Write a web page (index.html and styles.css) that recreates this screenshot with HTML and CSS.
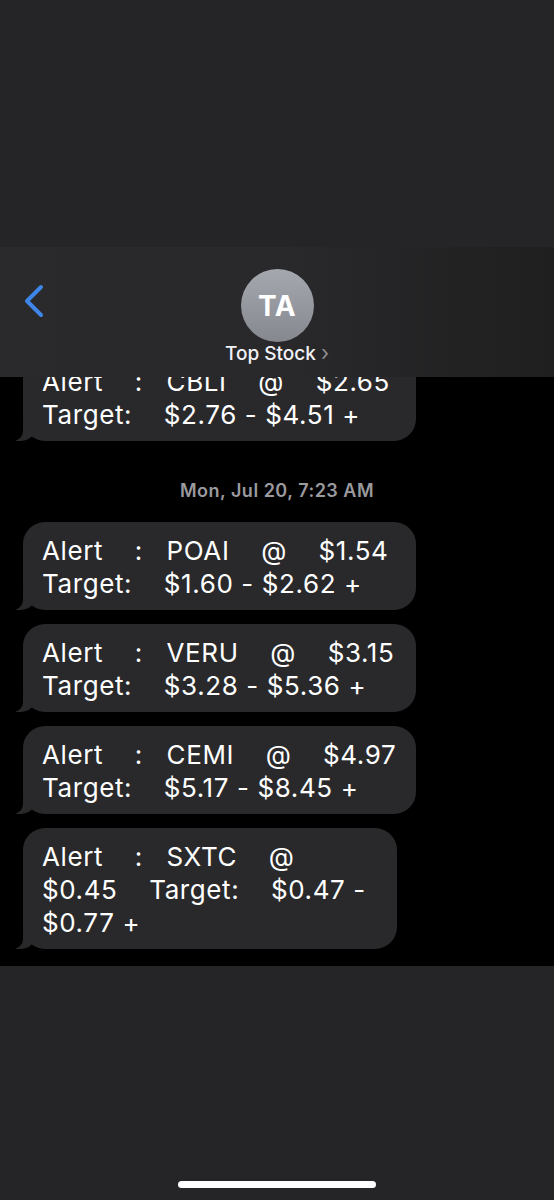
FILE: index.html
```html
<!DOCTYPE html>
<html lang="en">
<head>
    <meta charset="UTF-8">
    <meta name="viewport" content="width=device-width, initial-scale=1.0">
    <title>Top Stock</title>
    <link rel="stylesheet" href="styles.css">
</head>
<body>
    <div class="status-area"></div>

    <div class="thread">
        <div class="nav">
            <a class="back" href="#" aria-label="Back">
                <svg width="22" height="34" viewBox="0 0 22 34">
                    <path d="M18 3 L4 17 L18 31" fill="none" stroke="#3d86e8" stroke-width="4" stroke-linecap="round" stroke-linejoin="round"/>
                </svg>
            </a>
            <div class="avatar">TA</div>
            <div class="contact-name">Top Stock <span class="chev">&#8250;</span></div>
        </div>

        <div class="messages">
            <div class="bubble">Alert    :   CBLI    @    $2.65<br>Target:    $2.76 - $4.51 +</div>

            <div class="timestamp">Mon, Jul 20, 7:23 AM</div>

            <div class="bubble">Alert    :   POAI    @    $1.54<br>Target:    $1.60 - $2.62 +</div>
            <div class="bubble">Alert    :   VERU    @    $3.15<br>Target:    $3.28 - $5.36 +</div>
            <div class="bubble">Alert    :   CEMI    @    $4.97<br>Target:    $5.17 - $8.45 +</div>
            <div class="bubble narrow">Alert    :   SXTC    @<br>$0.45    Target:    $0.47 -<br>$0.77 +</div>
        </div>
    </div>

    <div class="bottom-area">
        <div class="home-indicator"></div>
    </div>
</body>
</html>
```

FILE: styles.css
```css
:root {
    --bubble-color: #29292b;
    --muted: #8e8e93;
}

* {
    box-sizing: border-box;
    margin: 0;
    padding: 0;
}

body {
    font-family: 'Inter', 'Liberation Sans', sans-serif;
    background: #252527;
    color: #fff;
    width: 554px;
    height: 1200px;
    overflow: hidden;
}

.status-area {
    height: 247px;
    background: #252527;
}

.thread {
    position: relative;
    height: 719px;
    background: #000;
    overflow: hidden;
}

/* header sits over the scrolled messages */
.nav {
    position: absolute;
    top: 0;
    left: 0;
    right: 0;
    height: 130px;
    z-index: 2;
    display: flex;
    flex-direction: column;
    align-items: center;
    padding-top: 22px;
    background: linear-gradient(90deg, #2a2a2c 0%, #29292b 50%, #1f1f20 100%);
}

.back {
    position: absolute;
    left: 23px;
    top: 37px;
    display: block;
}

.back svg {
    display: block;
}

.avatar {
    width: 73px;
    height: 73px;
    border-radius: 50%;
    background: linear-gradient(180deg, #a6a8af 0%, #868890 100%);
    display: flex;
    align-items: center;
    justify-content: center;
    font-size: 28px;
    font-weight: 700;
    color: #fff;
    letter-spacing: 0.5px;
}

.contact-name {
    font-size: 19px;
    line-height: 22px;
    font-weight: 500;
    color: #f2f2f7;
}

.contact-name .chev {
    color: var(--muted);
    font-weight: 400;
    font-size: 21px;
}

.messages {
    display: flex;
    flex-direction: column;
    align-items: flex-start;
    gap: 14px;
    padding: 106px 0 0 23px;
}

.bubble {
    position: relative;
    width: 393px;
    padding: 12px 19px 10px;
    background: var(--bubble-color);
    border-radius: 22px;
    font-size: 26px;
    line-height: 33px;
    letter-spacing: 0.6px;
    white-space: pre;
}

.bubble.narrow {
    width: 374px;
}

/* tail */
.bubble::before {
    content: '';
    position: absolute;
    bottom: 0;
    left: -7px;
    width: 20px;
    height: 20px;
    background: var(--bubble-color);
    border-bottom-right-radius: 15px;
}

.bubble::after {
    content: '';
    position: absolute;
    bottom: 0;
    left: -10px;
    width: 10px;
    height: 20px;
    background: #000;
    border-bottom-right-radius: 10px;
}

.timestamp {
    align-self: center;
    margin: 25px 0 6px -23px;
    font-size: 18px;
    line-height: 22px;
    font-weight: 600;
    letter-spacing: 0.5px;
    color: #9a9a9f;
}

.bottom-area {
    height: 234px;
    display: flex;
    justify-content: center;
    padding-top: 215px;
}

.home-indicator {
    width: 198px;
    height: 7px;
    border-radius: 4px;
    background: #fff;
}
```
